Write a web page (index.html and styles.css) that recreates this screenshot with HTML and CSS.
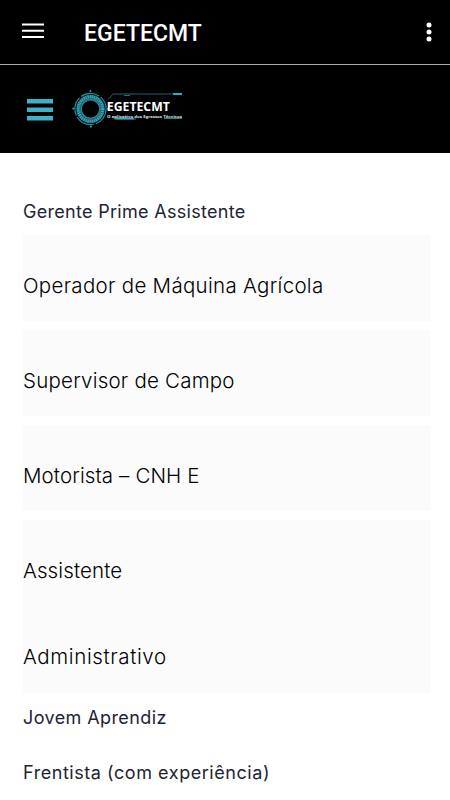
FILE: index.html
```
<!DOCTYPE html>
<html lang="pt-BR">
<head>
  <meta charset="UTF-8">
  <meta name="viewport" content="width=device-width, initial-scale=1.0">
  <title>EGETECMT</title>
  <link rel="stylesheet" href="styles.css">
</head>
<body>

  <header class="app-bar">
    <svg class="menu-icon" width="22" height="16" viewBox="0 0 22 16">
      <path d="M0 1.5h22M0 7.7h22M0 14h22" stroke="#fff" stroke-width="2"/>
    </svg>
    <h1 class="app-title">EGETECMT</h1>
    <svg class="more-icon" width="6" height="20" viewBox="0 0 6 20" fill="#fff">
      <circle cx="3" cy="3" r="2.5"/>
      <circle cx="3" cy="10" r="2.5"/>
      <circle cx="3" cy="17" r="2.5"/>
    </svg>
  </header>

  <nav class="site-bar">
    <svg class="site-menu" width="26" height="22" viewBox="0 0 26 22">
      <path d="M0 2.3h26M0 10.8h26M0 19.3h26" stroke="#3cb2c9" stroke-width="4.4"/>
    </svg>
    <svg class="logo" width="112" height="42" viewBox="0 0 112 42">
      <g fill="none" stroke="#36aabd">
        <circle cx="18.5" cy="21" r="15.6" stroke="#2c8d9e" stroke-width="1.2" stroke-dasharray="19 2"/>
        <circle cx="18.5" cy="21" r="12" stroke="#1c6674" stroke-width="4.4"/>
        <circle cx="18.5" cy="21" r="12.3" stroke-width="3" stroke-dasharray="1.2 .9"/>
        <circle cx="18.5" cy="21" r="9.4" stroke="#2c8190" stroke-width="1.6"/>
        <path d="M36 11.5l5-5.5h69" stroke="#1a6672"/>
        <path d="M101 6h9" stroke="#36aabd" stroke-width="2"/>
        <path d="M52 7.5h6" stroke="#1d717e"/>
        <path d="M42 31h22M92 30.5h18" stroke="#218292" stroke-width="1"/>
        <path d="M44 30.6h18" stroke-width="1.6"/>
      </g>
      <g fill="#36aabd">
        <circle cx="18.5" cy="3" r="1"/>
        <circle cx="1.3" cy="20.5" r="1"/>
        <circle cx="19" cy="38.5" r="1"/>
        <circle cx="36" cy="21" r="1"/>
      </g>
      <text class="logo-name" x="34.8" y="23" textLength="63" lengthAdjust="spacingAndGlyphs">EGETECMT</text>
      <text class="logo-tag" x="35" y="29.8" textLength="75" lengthAdjust="spacingAndGlyphs">O aplicativo dos Egressos Técnicos</text>
    </svg>
  </nav>

  <main class="jobs">
    <p class="job-text first">Gerente Prime Assistente</p>
    <h2 class="job-card operador">Operador de Máquina Agrícola</h2>
    <h2 class="job-card supervisor">Supervisor de Campo</h2>
    <h2 class="job-card motorista">Motorista – CNH E</h2>
    <h2 class="job-card assistente">Assistente<br><span class="administrativo">Administrativo</span></h2>
    <p class="job-text jovem">Jovem Aprendiz</p>
    <p class="job-text frentista">Frentista (com experiência)</p>
  </main>

</body>
</html>
```
FILE: styles.css
```
* {
  box-sizing: border-box;
}

body {
  margin: 0;
  height: 800px;
  overflow: hidden;
  background-color: #fff;
}

.app-bar {
  display: flex;
  align-items: center;
  height: 65px;
  padding: 0 18px 2px 22px;
  background-color: #000;
  border-bottom: 1px solid #aaa;
}

.app-title {
  margin: 5px 0 0 40px;
  font-family: Roboto, sans-serif;
  font-size: 23px;
  font-weight: 500;
  line-height: 28px;
  color: #fff;
}

.more-icon {
  margin-left: auto;
  margin-top: 1px;
}

.site-bar {
  display: flex;
  align-items: center;
  height: 88px;
  padding: 0 27px 0 27px;
  background-color: #000;
}

.site-menu {
  margin-top: 2px;
}

.logo {
  margin-left: 19px;
}

.logo-name {
  font-family: "Open Sans", sans-serif;
  font-size: 12px;
  font-weight: 700;
  fill: #fff;
}

.logo-tag {
  font-family: "Open Sans", sans-serif;
  font-size: 4px;
  font-weight: 700;
  fill: #dce8ea;
}

.jobs {
  padding: 36px 19px 0 23px;
}

.job-text {
  margin: 0;
  padding-top: 5px;
  height: 55px;
  font-family: Inter, sans-serif;
  font-size: 18px;
  letter-spacing: 0.3px;
  line-height: 40px;
  color: #1c2434;
  white-space: nowrap;
}

.job-text.first {
  height: 46px;
  padding-top: 3px;
}

.job-text.jovem {
  letter-spacing: 0.4px;
}

.job-text.frentista {
  letter-spacing: 0.55px;
}

.job-card {
  margin: 0 0 9px;
  padding-top: 8px;
  font-family: Inter, sans-serif;
  font-size: 20.5px;
  font-weight: 350;
  line-height: 86px;
  height: 86px;
  color: #000;
  background-color: #fbfbfb;
  white-space: nowrap;
}

.job-card.operador {
  letter-spacing: 0.3px;
}

.job-card.supervisor {
  letter-spacing: 0.22px;
}

.job-card.motorista {
  letter-spacing: 0.12px;
}

.job-card.assistente {
  height: 173px;
  margin-bottom: 0;
  letter-spacing: 0.12px;
}

.job-card .administrativo {
  letter-spacing: 0.63px;
}
```
